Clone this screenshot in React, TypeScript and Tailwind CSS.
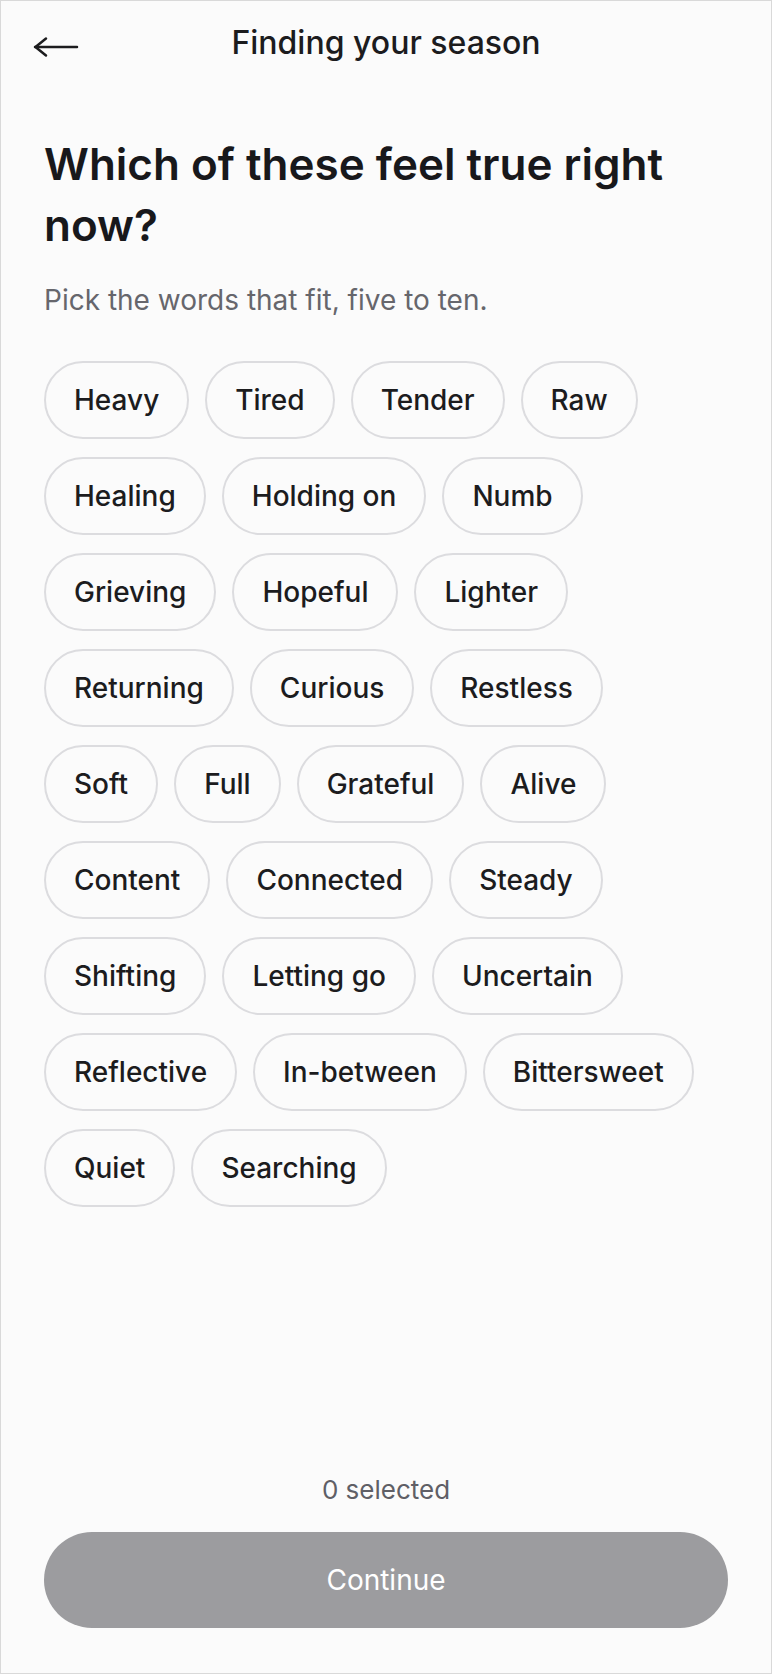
import { useState } from "react";

const WORDS = [
  "Heavy",
  "Tired",
  "Tender",
  "Raw",
  "Healing",
  "Holding on",
  "Numb",
  "Grieving",
  "Hopeful",
  "Lighter",
  "Returning",
  "Curious",
  "Restless",
  "Soft",
  "Full",
  "Grateful",
  "Alive",
  "Content",
  "Connected",
  "Steady",
  "Shifting",
  "Letting go",
  "Uncertain",
  "Reflective",
  "In-between",
  "Bittersweet",
  "Quiet",
  "Searching",
];

function BackArrow() {
  return (
    <svg width="46" height="22" viewBox="0 0 46 22" fill="none" aria-hidden="true">
      <path d="M2 11H44" stroke="#1c1c1e" strokeWidth="2.5" strokeLinecap="round" />
      <path
        d="M13 2.5L2.5 11L13 19.5"
        stroke="#1c1c1e"
        strokeWidth="2.5"
        strokeLinecap="round"
        strokeLinejoin="round"
      />
    </svg>
  );
}

function Chip({ label, active, onClick }: { label: string; active: boolean; onClick: () => void }) {
  return (
    <button
      type="button"
      onClick={onClick}
      className={
        active
          ? "rounded-full border-2 border-[#1c1c1e] bg-[#1c1c1e] px-[28px] py-[16px] text-[28px] leading-[42px] font-medium text-white"
          : "rounded-full border-2 border-[#dcdcdf] bg-transparent px-[28px] py-[16px] text-[28px] leading-[42px] font-medium text-[#1c1c1e]"
      }
    >
      {label}
    </button>
  );
}

export default function App() {
  const [picked, setPicked] = useState<string[]>([]);

  const toggle = (w: string) =>
    setPicked((p) => (p.includes(w) ? p.filter((x) => x !== w) : [...p, w]));

  const ready = picked.length >= 5 && picked.length <= 10;

  return (
    <div className="flex h-[1674px] w-[772px] flex-col border border-[#d9d9d9] bg-[#fbfbfb] font-['Inter','Noto_Sans',sans-serif] text-[#1c1c1e]">
      {/* header */}
      <div className="relative flex h-[84px] items-center justify-center">
        <button type="button" className="absolute left-[32px] top-[35px]" aria-label="Back">
          <BackArrow />
        </button>
        <h1 className="text-[32px] font-medium">Finding your season</h1>
      </div>

      {/* body */}
      <div className="flex flex-col px-[43px] pt-[49px]">
        <h2 className="text-[44px] leading-[61px] font-semibold text-[#18181b]">
          Which of these feel true right now?
        </h2>
        <p className="mt-[24px] text-[28px] leading-[40px] text-[#66666c]">
          Pick the words that fit, five to ten.
        </p>
        <div className="mt-[41px] flex flex-wrap gap-x-[16px] gap-y-[18px]">
          {WORDS.map((w) => (
            <Chip key={w} label={w} active={picked.includes(w)} onClick={() => toggle(w)} />
          ))}
        </div>
      </div>

      <div className="flex-1" />

      {/* footer */}
      <div className="flex flex-col items-center px-[43px] pb-[45px]">
        <p className="text-[26px] leading-[40px] text-[#5f5f66]">{picked.length} selected</p>
        <button
          type="button"
          disabled={!ready}
          className={
            ready
              ? "mt-[22px] h-[96px] w-full rounded-full bg-[#1c1c1e] text-[28px] font-normal text-white"
              : "mt-[22px] h-[96px] w-full rounded-full bg-[#9c9c9f] text-[28px] font-normal text-white"
          }
        >
          Continue
        </button>
      </div>
    </div>
  );
}
